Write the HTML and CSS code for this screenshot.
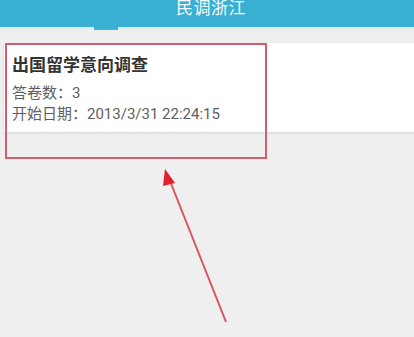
FILE: index.html
```html
<!DOCTYPE html>
<html lang="zh">
<head>
<meta charset="utf-8">
<link rel="stylesheet" href="styles.css">
</head>
<body>
<div class="app">
  <header class="header">
    <h1 class="title">民调浙江</h1>
  </header>
  <div class="tabline"><span class="indicator"></span></div>
  <main class="content">
    <div class="card">
      <h2 class="card-title">出国留学意向调查</h2>
      <p class="meta">答卷数：3</p>
      <p class="meta">开始日期：2013/3/31 22:24:15</p>
    </div>
  </main>
  <div class="highlight"></div>
  <svg class="arrow" width="414" height="337" viewBox="0 0 414 337">
    <line x1="226" y1="322" x2="170" y2="181" stroke="#d8555f" stroke-width="2"/>
    <polygon points="165,169 175,183 163,186" fill="#e0202e"/>
  </svg>
</div>
</body>
</html>
```
FILE: styles.css
```css
* { box-sizing: border-box; }
html, body { margin: 0; padding: 0; }
body {
  width: 414px;
  height: 337px;
  overflow: hidden;
  background: #efefef;
  font-family: Roboto, "Noto Sans CJK SC", sans-serif;
}
.app { position: relative; width: 414px; height: 337px; }
.header {
  height: 27px;
  background: #39afd3;
  display: flex;
  justify-content: center;
  align-items: flex-start;
  overflow: hidden;
}
.title {
  margin: 0 0 0 8px;
  font-size: 17px;
  font-weight: 400;
  line-height: 17px;
  color: #f4fbfd;
  letter-spacing: 0.5px;
}
.tabline {
  height: 3px;
  background: #dff0f5;
  display: flex;
}
.indicator {
  display: block;
  margin-left: 94px;
  width: 24px;
  height: 3px;
  background: #3cb2d6;
}
.content { padding: 13px 0 0 4px; }
.card {
  background: #fff;
  height: 89px;
  padding: 12px 8px 0 8px;
  box-shadow: 0 1px 2px rgba(0,0,0,0.12);
}
.card-title {
  margin: 0 0 8px 0;
  font-size: 17px;
  font-weight: 700;
  line-height: 20px;
  color: #333;
}
.meta {
  margin: 0 0 1px 0;
  font-size: 15px;
  line-height: 20px;
  color: #5e5e5e;
}
.highlight {
  position: absolute;
  left: 5px;
  top: 43px;
  width: 262px;
  height: 116px;
  border: 2px solid #d25d6c;
}
.arrow { position: absolute; left: 0; top: 0; }
```
